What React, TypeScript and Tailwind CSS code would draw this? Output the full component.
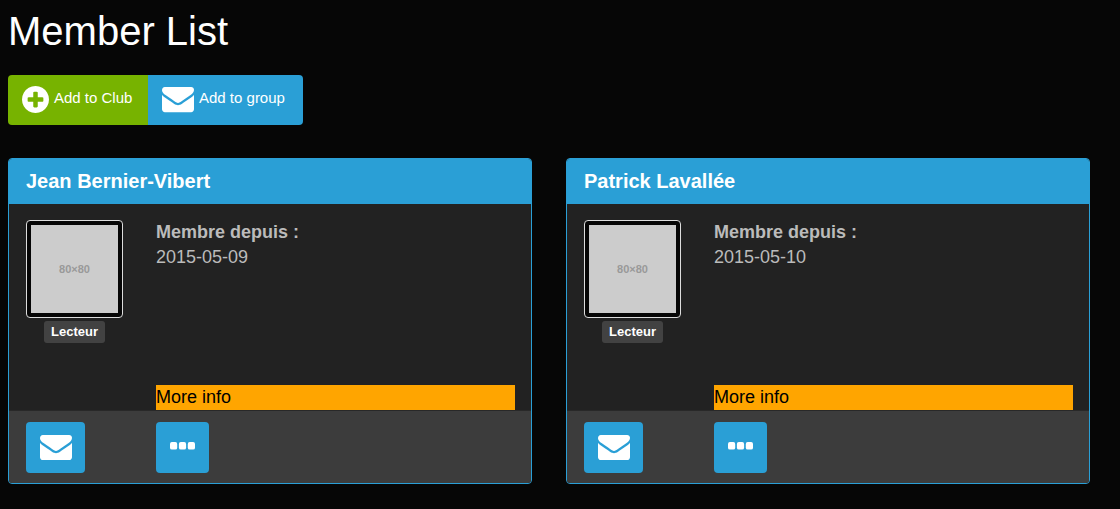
type IconProps = { className?: string };

function EnvelopeIcon({ className }: IconProps) {
  return (
    <svg viewBox="0 256 1792 1408" className={className} fill="currentColor" aria-hidden="true">
      <path d="M1792 710v794q0 66-47 113t-113 47H160q-66 0-113-47T0 1504V710q44 49 101 87 362 246 497 345 57 42 92.500 65.500t94.500 48 110 24.500h2q51 0 110-24.500t94.500-48T1194 1142q170-123 498-345 57-39 100-87z" />
      <path d="M1792 416q0 79-49 151t-122 123q-376 261-468 325-10 7-42.500 31t-54 38.500-52 32.500-57.500 27-50 9h-2q-23 0-50-9t-57.500-27-52-32.500-54-38.500T639 1015q-91-64-262-182.500T172 690q-62-42-117-115.500T0 438q0-78 41.500-130T160 256h1472q65 0 112.500 47t47.500 113z" />
    </svg>
  );
}

function PlusCircleIcon({ className }: IconProps) {
  return (
    <svg viewBox="0 0 1536 1536" className={className} fill="currentColor" aria-hidden="true">
      <path
        fillRule="evenodd"
        d="M1216 832V704q0-26-19-45t-45-19H896V384q0-26-19-45t-45-19H704q-26 0-45 19t-19 45v256H384q-26 0-45 19t-19 45v128q0 26 19 45t45 19h256v256q0 26 19 45t45 19h128q26 0 45-19t19-45V896h256q26 0 45-19t19-45zM1536 768q0 209-103 385.500T1153.500 1433 768 1536t-385.500-103T103 1153.500 0 768t103-385.500T382.500 103 768 0t385.500 103T1433 382.500 1536 768z"
      />
    </svg>
  );
}

function EllipsisIcon({ className }: IconProps) {
  return (
    <svg viewBox="0 0 25 8" className={className} fill="currentColor" aria-hidden="true">
      <rect width="7.2" height="7.6" rx="1.9" />
      <rect x="8.900" width="7.2" height="7.6" rx="1.9" />
      <rect x="17.800" width="7.2" height="7.6" rx="1.9" />
    </svg>
  );
}

type Member = { name: string; since: string; role: string };

const members: Member[] = [
  { name: "Jean Bernier-Vibert", since: "2015-05-09", role: "Lecteur" },
  { name: "Patrick Lavallée", since: "2015-05-10", role: "Lecteur" },
];

function MemberCard({ name, since, role }: Member) {
  return (
    <article className="overflow-hidden rounded border border-[#2a9fd6] bg-[#222222]">
      <header className="bg-[#2a9fd6] py-[9px] pr-4 pl-[17px]">
        <h2 className="text-[20px] leading-[27px] font-bold text-white">{name}</h2>
      </header>
      <div className="flex gap-[33px] pt-4 pr-4 pl-[17px]">
        <div className="flex w-[97px] shrink-0 flex-col items-center gap-[3px]">
          <div className="w-full rounded border border-[#dddddd] bg-[#060606] p-1">
            <div className="flex h-[88px] items-center justify-center bg-[#cccccc] text-[11px] font-bold text-[#999999]">
              80×80
            </div>
          </div>
          <span className="rounded-[3px] bg-[#424242] px-[7px] text-[13px] leading-[22px] font-bold text-white">
            {role}
          </span>
        </div>
        <div className="flex min-h-[190px] min-w-0 flex-1 flex-col justify-between text-[18px] leading-[25px] text-[#bbbbbb]">
          <dl>
            <dt className="font-bold">Membre depuis :</dt>
            <dd>{since}</dd>
          </dl>
          <p className="bg-[#ffa500] text-black">More info</p>
        </div>
      </div>
      <footer className="flex gap-[33px] border-t border-[#282828] bg-[#3c3c3c] pt-[11px] pr-4 pb-2.5 pl-[17px]">
        <div className="w-[97px] shrink-0">
          <button
            type="button"
            aria-label={`Message ${name}`}
            className="flex h-[51px] items-center rounded bg-[#2a9fd6] pr-[13px] pl-[14px] text-white"
          >
            <EnvelopeIcon className="w-8" />
          </button>
        </div>
        <button
          type="button"
          aria-label={`More about ${name}`}
          className="flex h-[51px] items-center rounded bg-[#2a9fd6] px-[14px] pb-[3px] text-white"
        >
          <EllipsisIcon className="h-2 w-[25px]" />
        </button>
      </footer>
    </article>
  );
}

export default function App() {
  return (
    <main className="min-h-screen bg-[#060606] pt-2 pr-[30px] pb-6 pl-2 font-['Liberation_Sans',Arial,sans-serif]">
      <h1 className="text-[40px] leading-[46px] text-white">Member List</h1>
      <div className="mt-[21px] flex text-[15px] text-white">
        <button
          type="button"
          className="flex h-[50px] min-w-[140px] items-center gap-[5px] rounded-l bg-[#77b300] px-[14px] pb-0.5"
        >
          <PlusCircleIcon className="w-[27px]" />
          <span className="pb-0.5">Add to Club</span>
        </button>
        <button
          type="button"
          className="flex h-[50px] min-w-[155px] items-center gap-[5px] rounded-r bg-[#2a9fd6] px-[14px]"
        >
          <EnvelopeIcon className="w-8" />
          <span className="pb-1">Add to group</span>
        </button>
      </div>
      <section className="mt-[33px] grid grid-cols-2 gap-[34px]" aria-label="Members">
        {members.map((member) => (
          <MemberCard key={member.name} {...member} />
        ))}
      </section>
    </main>
  );
}
